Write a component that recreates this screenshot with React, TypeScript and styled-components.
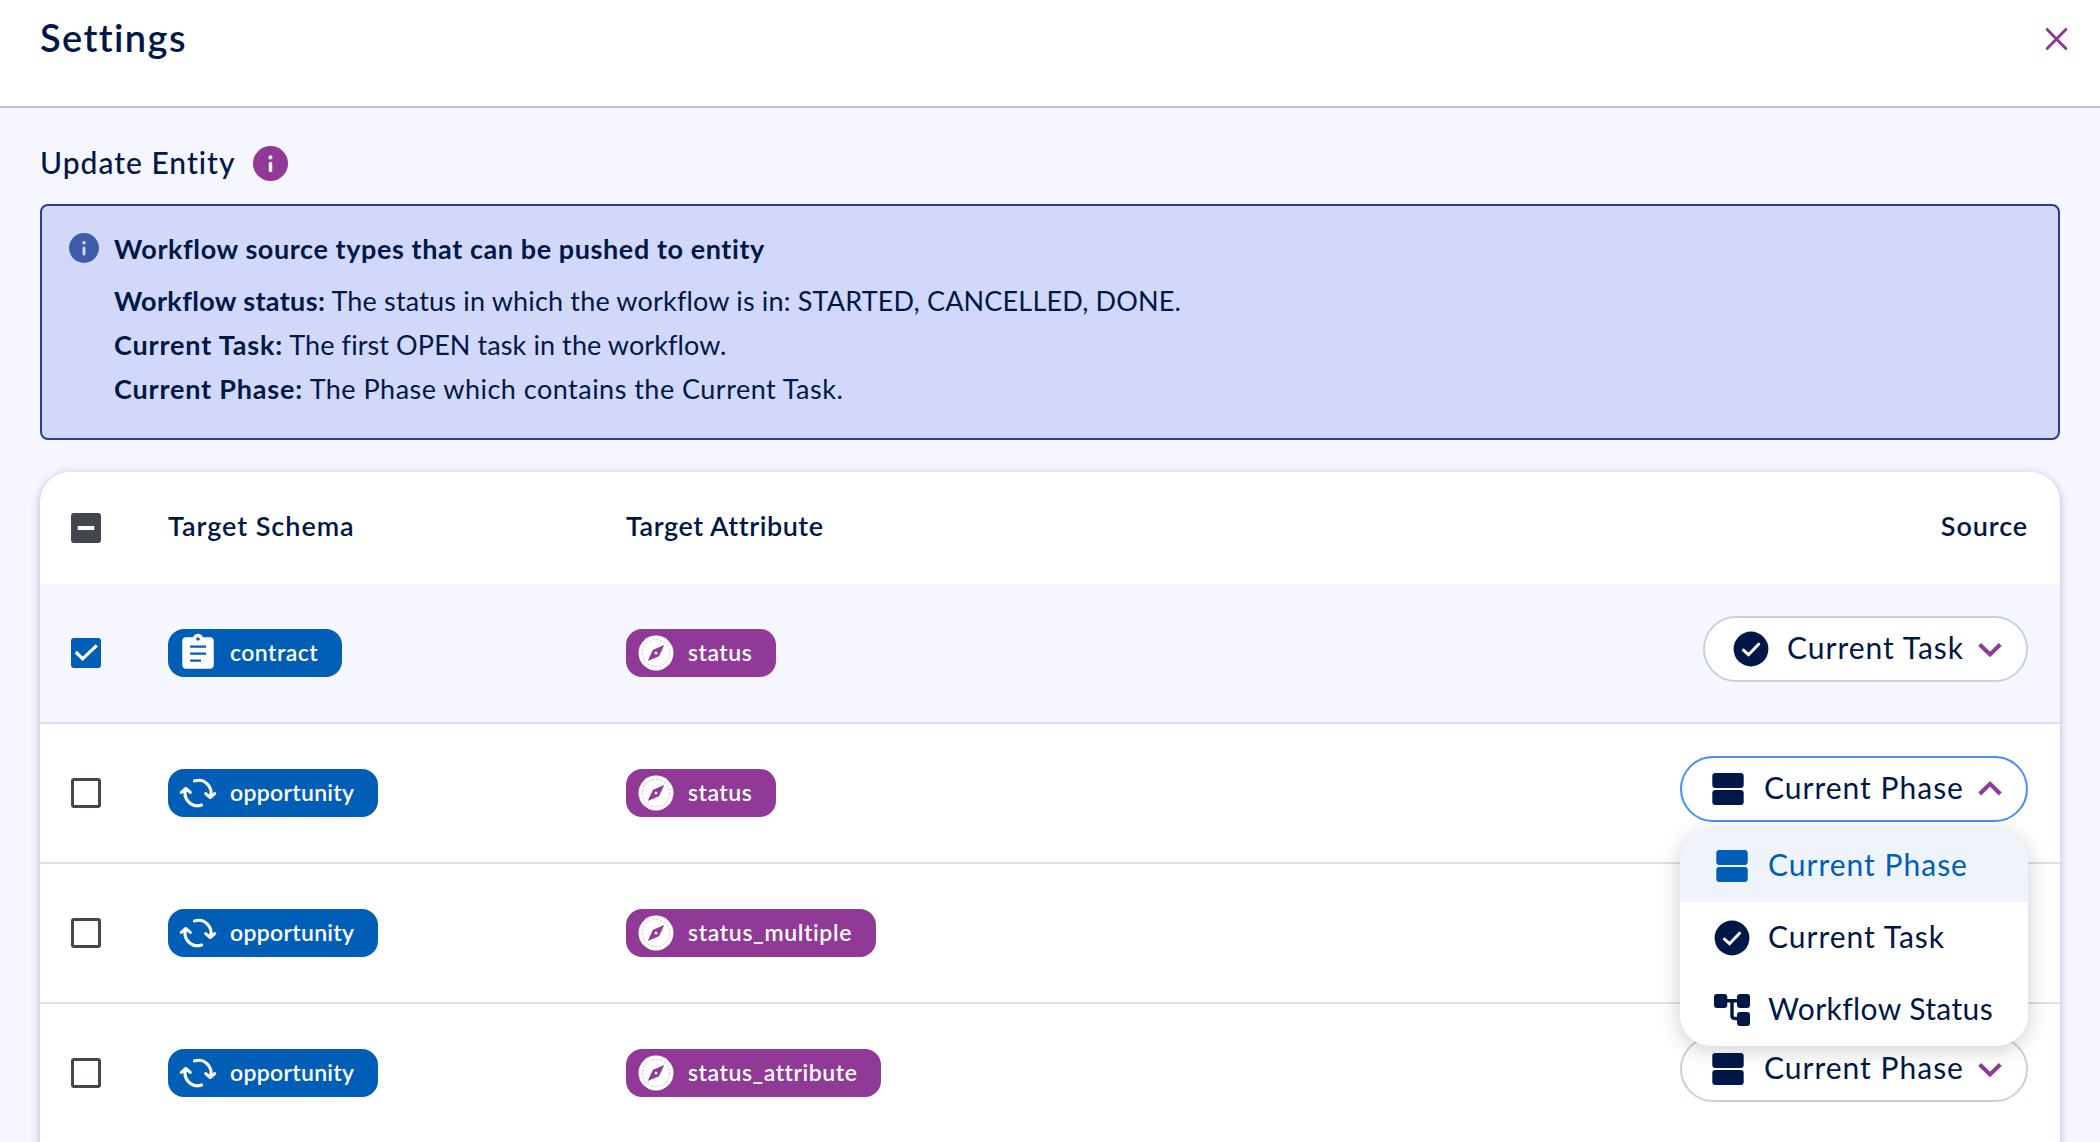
import React from "react";
import styled, { createGlobalStyle } from "styled-components";

const navy = "#001848";
const purple = "#903996";
const blue = "#005eb6";

const GlobalStyle = createGlobalStyle`
  * { box-sizing: border-box; }
  html, body { margin: 0; padding: 0; }
  body {
    background: #f5f6ff;
    color: ${navy};
    font-family: Lato, "Open Sans", "Liberation Sans", sans-serif;
    overflow: hidden;
  }
`;

const Page = styled.div`
  width: 2100px;
  height: 1142px;
  overflow: hidden;
  background: #f5f6ff;
`;

const Header = styled.header`
  display: flex;
  justify-content: space-between;
  align-items: flex-start;
  height: 108px;
  padding: 14px 31px 0 40px;
  background: #ffffff;
  border-bottom: 2px solid #c3c3d0;
`;

const Title = styled.h1`
  margin: 0;
  font-size: 38px;
  line-height: 46px;
  font-weight: 600;
  letter-spacing: 1.4px;
`;

const CloseButton = styled.button`
  display: flex;
  margin: 12px 0 0;
  padding: 0;
  border: 0;
  background: none;
`;

const Content = styled.main`
  padding: 36px 40px 0;
`;

const SectionHeading = styled.div`
  display: flex;
  align-items: center;
  gap: 17px;
  height: 40px;
  padding-bottom: 1px;
`;

const SectionTitle = styled.h2`
  margin: 0;
  font-size: 30px;
  line-height: 36px;
  font-weight: 500;
  letter-spacing: 1px;
  padding-bottom: 4px;
`;

const Notice = styled.section`
  display: flex;
  gap: 15px;
  height: 236px;
  margin-top: 20px;
  padding: 21px 27px;
  background: #d2d8fa;
  border: 2px solid #26408f;
  border-radius: 8px;
`;

const NoticeIcon = styled.div`
  display: flex;
  flex: none;
  height: 30px;
  margin-top: 6px;
`;

const NoticeTitle = styled.p`
  margin: 0 0 8px;
  font-size: 27px;
  line-height: 44px;
  font-weight: 700;
  letter-spacing: 0.59px;
`;

const NoticeLine = styled.p<{ $spacing: number }>`
  margin: 0;
  font-size: 27px;
  line-height: 44px;
  font-weight: 400;
  letter-spacing: ${(p) => p.$spacing}px;
`;

const Term = styled.strong<{ $spacing: number }>`
  font-weight: 700;
  letter-spacing: ${(p) => p.$spacing}px;
`;

const Card = styled.section`
  margin-top: 32px;
  height: 720px;
  background: #ffffff;
  border-radius: 30px 30px 0 0;
  box-shadow: 0 2px 10px rgba(20, 30, 80, 0.28);
`;

const columns = "128px 458px 1fr auto";

const HeadRow = styled.div`
  display: grid;
  grid-template-columns: ${columns};
  align-items: center;
  height: 112px;
  padding-right: 32px;
`;

const BodyRow = styled.div<{ $selected?: boolean }>`
  display: grid;
  grid-template-columns: ${columns};
  align-items: center;
  height: 140px;
  padding-right: 32px;
  background: ${(p) => (p.$selected ? "#f5f6ff" : "transparent")};
  border-bottom: 2px solid #d6e2ee;
`;

const ColumnTitle = styled.div<{ $spacing: number }>`
  font-size: 27px;
  line-height: 32px;
  font-weight: 600;
  padding-bottom: 4px;
  letter-spacing: ${(p) => p.$spacing}px;
`;

const CheckCell = styled.div`
  display: flex;
  padding-left: 31px;
`;

const CheckBox = styled.div<{ $state: "some" | "on" | "off" }>`
  display: flex;
  align-items: center;
  justify-content: center;
  width: 30px;
  height: 30px;
  border-radius: 3px;
  border: 3px solid ${(p) => (p.$state === "on" ? blue : "#42474e")};
  background: ${(p) =>
    p.$state === "on" ? blue : p.$state === "some" ? "#42474e" : "#ffffff"};
  svg { flex: none; }
`;

const Chip = styled.span<{ $tone: string }>`
  display: inline-flex;
  align-items: center;
  justify-self: start;
  height: 48px;
  padding: 0 24px 0 9px;
  gap: 11px;
  border-radius: 16px;
  color: #ffffff;
  background: ${(p) => p.$tone};
`;

const ChipText = styled.span<{ $spacing: number }>`
  font-size: 23px;
  line-height: 28px;
  font-weight: 600;
  padding-bottom: 3px;
  letter-spacing: ${(p) => p.$spacing}px;
`;

const SelectWrap = styled.div`
  position: relative;
  margin-bottom: 8px;
`;

const Select = styled.button<{ $open?: boolean; $width: number }>`
  display: flex;
  align-items: center;
  width: ${(p) => p.$width}px;
  height: 66px;
  padding: 0 15px 0 25px;
  border: 2px solid ${(p) => (p.$open ? "#4590f6" : "#c6d1df")};
  border-radius: 33px;
  background: #ffffff;
  color: ${navy};
  font: inherit;
`;

const SelectText = styled.span<{ $spacing?: number }>`
  flex: 1;
  text-align: left;
  white-space: nowrap;
  margin-left: 15px;
  font-size: 30px;
  line-height: 36px;
  padding-bottom: 5px;
  letter-spacing: ${(p) => p.$spacing ?? 1}px;
`;

const Menu = styled.div`
  position: absolute;
  z-index: 2;
  top: 74px;
  right: 0;
  width: 348px;
  overflow: hidden;
  border-radius: 32px;
  background: #ffffff;
  box-shadow: 0 4px 22px rgba(0, 10, 30, 0.2);
`;

const MenuItem = styled.div<{ $active?: boolean }>`
  display: flex;
  align-items: center;
  height: 72px;
  padding-left: 31px;
  color: ${(p) => (p.$active ? blue : navy)};
  background: ${(p) => (p.$active ? "#eff4fc" : "#ffffff")};
`;

const Icon = styled.svg`
  display: block;
  flex: none;
`;

const InfoIcon = ({ size, fill, mark }: { size: number; fill: string; mark: string }) => (
  <Icon width={size} height={size} viewBox="0 0 20 20">
    <circle cx="10" cy="10" r="10" fill={fill} />
    <circle cx="10" cy="6.5" r="1.150" fill={mark} />
    <path d="M10 10V14" stroke={mark} strokeWidth="2" strokeLinecap="round" />
  </Icon>
);

const ClipboardIcon = () => (
  <Icon width="42" height="42" viewBox="0 0 24 24" fill="#ffffff">
    <path d="M19 3h-4.18C14.4 1.84 13.3 1 12 1s-2.4.84-2.82 2H5c-1.1 0-2 .9-2 2v14c0 1.1.9 2 2 2h14c1.1 0 2-.9 2-2V5c0-1.1-.9-2-2-2zm-7 0c.55 0 1 .45 1 1s-.45 1-1 1-1-.45-1-1 .45-1 1-1zm1.700 14H7.500v-1.300h6.200V17zm2.900-4H7.500v-1.300h9.100v1.300zm0-4H7.500V7.700h9.100v1.300z" />
  </Icon>
);

const CycleIcon = () => (
  <Icon
    width="42"
    height="42"
    viewBox="-21 -21 42 42"
    fill="none"
    stroke="#ffffff"
    strokeWidth="3.100"
    strokeLinecap="round"
    strokeLinejoin="round"
  >
    <path d="M-3.600 -12A12.600 12.600 0 0 1 12.200 4.300M7.700 .6L12.200 4.500L16.700 .6" />
    <path d="M3.600 12A12.600 12.600 0 0 1 -12.200 -4.300M-7.700 -.6L-12.200 -4.500L-16.700 -.6" />
  </Icon>
);

const CompassIcon = () => (
  <Icon width="42" height="42" viewBox="-21 -21 42 42">
    <circle r="17.500" fill="#ffffff" />
    <circle r="13.600" fill="none" stroke="#d9b8dd" strokeWidth="0.900" strokeDasharray="2.500 1.500" />
    <path d="M8.300 -8L3 3.300L-8.300 8L-3 -3.300Z" fill={purple} />
    <circle r="1.500" fill="#ffffff" />
  </Icon>
);

const TaskIcon = () => (
  <Icon width="42" height="42" viewBox="-21 -21 42 42">
    <circle r="17.400" fill="currentColor" />
    <path
      d="M-7.600 1.200L-2.500 5.700L7.600 -4.800"
      fill="none"
      stroke="#ffffff"
      strokeWidth="3"
      strokeLinecap="round"
      strokeLinejoin="miter"
    />
  </Icon>
);

const PhaseIcon = () => (
  <Icon width="42" height="42" viewBox="-21 -21 42 42" fill="currentColor">
    <rect x="-15.700" y="-16" width="31.400" height="15" rx="3" />
    <rect x="-15.700" y="1" width="31.400" height="15" rx="3" />
  </Icon>
);

const WorkflowIcon = () => (
  <Icon width="42" height="42" viewBox="-21 -21 42 42" fill="currentColor">
    <rect x="-18" y="-16" width="13.300" height="14" rx="3" />
    <rect x="5" y="-16" width="13" height="14" rx="3" />
    <rect x="5" y="2" width="13" height="14" rx="3" />
    <path d="M-6 -9.300H6M0 -9V6Q0 8.500 2.500 8.500H6" fill="none" stroke="currentColor" strokeWidth="3.400" />
  </Icon>
);

const Chevron = ({ up }: { up?: boolean }) => (
  <Icon width="42" height="42" viewBox="-21 -21 42 42">
    <path
      d={up ? "M-10.300 5L0 -5.200L10.300 5" : "M-10.300 -4.500L0 5.500L10.300 -4.500"}
      fill="none"
      stroke={purple}
      strokeWidth="4"
    />
  </Icon>
);

type Source = "task" | "phase";

const sourceLabels: Record<Source, string> = {
  task: "Current Task",
  phase: "Current Phase",
};

const labelSpacing: Record<string, number> = {
  contract: 0.45,
  opportunity: 0.3,
  status: 0.5,
  status_multiple: 0.65,
  status_attribute: 0.55,
};

const rows: { schema: string; attribute: string; source?: Source; checked?: boolean; open?: boolean }[] = [
  { schema: "contract", attribute: "status", source: "task", checked: true },
  { schema: "opportunity", attribute: "status", source: "phase", open: true },
  { schema: "opportunity", attribute: "status_multiple" },
  { schema: "opportunity", attribute: "status_attribute", source: "phase" },
];

export default function App() {
  return (
    <Page>
      <GlobalStyle />
      <Header>
        <Title>Settings</Title>
        <CloseButton aria-label="Close">
          <Icon width="25" height="25" viewBox="-12.500 -12.500 25 25" stroke={purple} strokeWidth="2.900" strokeLinecap="round">
            <path d="M-9.300 -9.100L9.300 9.900M9.300 -9.100L-9.300 9.900" />
          </Icon>
        </CloseButton>
      </Header>
      <Content>
        <SectionHeading>
          <SectionTitle>Update Entity</SectionTitle>
          <InfoIcon size={35} fill={purple} mark="#f5f6ff" />
        </SectionHeading>
        <Notice>
          <NoticeIcon>
            <InfoIcon size={30} fill="#3f5bab" mark="#d2d8fa" />
          </NoticeIcon>
          <div>
            <NoticeTitle>Workflow source types that can be pushed to entity</NoticeTitle>
            <NoticeLine $spacing={0.17}>
              <Term $spacing={0.35}>Workflow status:</Term> The status in which the workflow is in: STARTED, CANCELLED, DONE.
            </NoticeLine>
            <NoticeLine $spacing={0.09}>
              <Term $spacing={0.85}>Current Task:</Term> The first OPEN task in the workflow.
            </NoticeLine>
            <NoticeLine $spacing={0.48}>
              <Term $spacing={0.82}>Current Phase:</Term> The Phase which contains the Current Task.
            </NoticeLine>
          </div>
        </Notice>
        <Card>
          <HeadRow>
            <CheckCell>
              <CheckBox $state="some">
                <Icon width="24" height="24" viewBox="-12 -12 24 24">
                  <rect x="-8.300" y="-2" width="16.600" height="4" fill="#ffffff" />
                </Icon>
              </CheckBox>
            </CheckCell>
            <ColumnTitle $spacing={0.95}>Target Schema</ColumnTitle>
            <ColumnTitle $spacing={0.55}>Target Attribute</ColumnTitle>
            <ColumnTitle $spacing={0.9}>Source</ColumnTitle>
          </HeadRow>
          {rows.map((row, i) => (
            <BodyRow key={i} $selected={row.checked}>
              <CheckCell>
                <CheckBox $state={row.checked ? "on" : "off"}>
                  {row.checked && (
                    <Icon width="24" height="24" viewBox="-12 -12 24 24">
                      <path d="M-10.200 -1L-3.400 5.800L10.800 -7.700" fill="none" stroke="#ffffff" strokeWidth="3.200" />
                    </Icon>
                  )}
                </CheckBox>
              </CheckCell>
              <Chip $tone={blue}>
                {row.schema === "contract" ? <ClipboardIcon /> : <CycleIcon />}
                <ChipText $spacing={labelSpacing[row.schema]}>{row.schema}</ChipText>
              </Chip>
              <Chip $tone={purple}>
                <CompassIcon />
                <ChipText $spacing={labelSpacing[row.attribute]}>{row.attribute}</ChipText>
              </Chip>
              {row.source && (
                <SelectWrap>
                  <Select $open={row.open} $width={row.source === "task" ? 325 : 348}>
                    {row.source === "task" ? <TaskIcon /> : <PhaseIcon />}
                    <SelectText>{sourceLabels[row.source]}</SelectText>
                    <Chevron up={row.open} />
                  </Select>
                  {row.open && (
                    <Menu>
                      <MenuItem $active>
                        <PhaseIcon />
                        <SelectText>Current Phase</SelectText>
                      </MenuItem>
                      <MenuItem>
                        <TaskIcon />
                        <SelectText>Current Task</SelectText>
                      </MenuItem>
                      <MenuItem>
                        <WorkflowIcon />
                        <SelectText $spacing={0.4}>Workflow Status</SelectText>
                      </MenuItem>
                    </Menu>
                  )}
                </SelectWrap>
              )}
            </BodyRow>
          ))}
        </Card>
      </Content>
    </Page>
  );
}
